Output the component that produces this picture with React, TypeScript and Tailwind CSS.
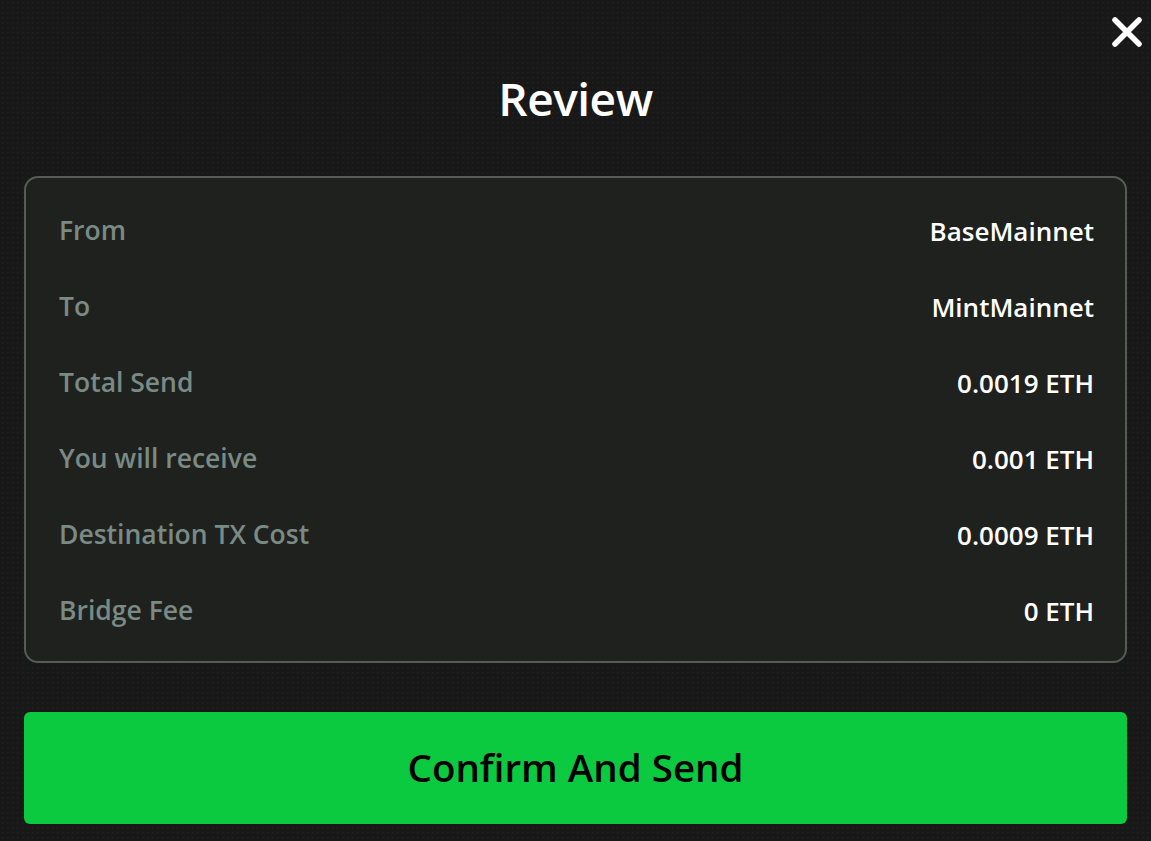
import React from "react";

const rows = [
  { label: "From", value: "BaseMainnet" },
  { label: "To", value: "MintMainnet" },
  { label: "Total Send", value: "0.0019 ETH" },
  { label: "You will receive", value: "0.001 ETH" },
  { label: "Destination TX Cost", value: "0.0009 ETH" },
  { label: "Bridge Fee", value: "0 ETH" },
];

export default function App() {
  return (
    <div className="relative min-h-screen w-full bg-[#171817] bg-[radial-gradient(rgba(255,255,255,0.03)_1px,transparent_1px)] bg-[length:5px_5px] px-6 pb-[18px] font-['Open_Sans','Noto_Sans',sans-serif]">
      {/* close */}
      <button type="button" className="absolute right-[6px] top-[14px] h-[36px] w-[36px] text-white">
        <svg viewBox="0 0 36 36" className="h-full w-full" fill="none" stroke="currentColor" strokeWidth="5.5" strokeLinecap="round">
          <path d="M6 6 L30 30 M30 6 L6 30" />
        </svg>
      </button>

      <header className="flex h-[176px] items-center justify-center pt-[20px]">
        <h1 className="text-[46px] font-semibold tracking-[-0.5px] text-white">Review</h1>
      </header>

      <div className="rounded-[14px] border-2 border-[#555b57] bg-[#1f211f] pb-[12px] pl-[33px] pr-[31px] pt-[15px]">
        {rows.map((row) => (
          <div key={row.label} className="flex h-[76px] items-center justify-between">
            <span className="text-[26.5px] font-semibold text-[#7a8a84]">{row.label}</span>
            <span className="text-[26px] font-semibold text-white">{row.value}</span>
          </div>
        ))}
      </div>

      <button
        type="button"
        className="mt-[49px] flex h-[112px] w-full items-center justify-center rounded-md bg-[#0bca3f] text-[38.5px] font-semibold text-black"
      >
        Confirm And Send
      </button>
    </div>
  );
}
